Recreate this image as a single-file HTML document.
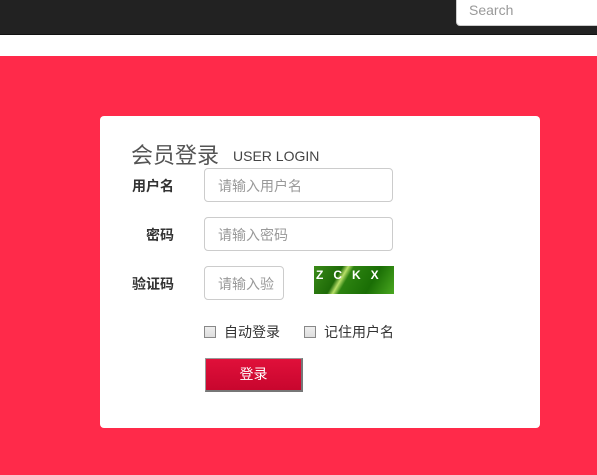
<!DOCTYPE html>
<html><head><meta charset="utf-8"><style>
*{margin:0;padding:0;box-sizing:border-box}
body{width:597px;height:475px;overflow:hidden;background:#ff2a4a;font-family:"Liberation Sans","Noto Sans CJK SC",sans-serif;position:relative}
.top{position:absolute;left:0;top:0;width:597px;height:35px;background:#222;border-bottom:1px solid #111}
.white{position:absolute;left:0;top:35px;width:597px;height:21px;background:#fff}
.search{position:absolute;left:456px;top:-6px;width:150px;height:32px;background:#fff;border:1px solid #ccc;border-radius:4px;padding:7px 0 0 12px;font-size:14px;color:#999}
.card{position:absolute;left:100px;top:116px;width:440px;height:312px;background:#fff;border-radius:4px}
.abs{position:absolute}
.h{left:31px;top:22px;font-size:22px;color:#555;white-space:nowrap}
.h span{font-size:14px;margin-left:14px;color:#444;vertical-align:2px}
.lab{font-size:14px;font-weight:bold;color:#333}
.inp{border:1px solid #ccc;border-radius:4px;height:34px;font-size:14px;color:#999;padding:7px 0 0 13px;background:#fff;white-space:nowrap;overflow:hidden}
.cb{width:12px;height:12px;border:1px solid #888;background:linear-gradient(#eee,#ddd)}
.t{font-size:14px;color:#333}
.cap{left:214px;top:150px;width:80px;height:28px;background:linear-gradient(120deg,#3a8a18 0%,#1e6a08 30%,#b8e068 36%,#2c8210 42%,#1a6e05 70%,#4aa820 100%);color:#fff;font-size:12px;font-weight:bold;letter-spacing:10px;padding:2px 0 0 2px}
.btn{left:105px;top:242px;width:98px;height:34px;background:linear-gradient(#e0103a,#c8062e);border:1px solid #999;border-right:2px solid #777;border-bottom:2px solid #777;color:#fff;font-size:14px;text-align:center;line-height:30px}
</style></head><body>
<div class="top"></div><div class="white"></div>
<div class="search">Search</div>
<div class="card">
<div class="abs h">会员登录<span>USER LOGIN</span></div>
<div class="abs lab" style="left:32px;top:60px">用户名</div>
<div class="abs inp" style="left:104px;top:52px;width:189px">请输入用户名</div>
<div class="abs lab" style="left:46px;top:109px">密码</div>
<div class="abs inp" style="left:104px;top:101px;width:189px">请输入密码</div>
<div class="abs lab" style="left:32px;top:158px">验证码</div>
<div class="abs inp" style="left:104px;top:150px;width:80px">请输入验</div>
<div class="abs cap">ZCKX</div>
<div class="abs cb" style="left:104px;top:210px"></div>
<div class="abs t" style="left:124px;top:206px">自动登录</div>
<div class="abs cb" style="left:204px;top:210px"></div>
<div class="abs t" style="left:224px;top:206px">记住用户名</div>
<div class="abs btn">登录</div>
</div>
</body></html>
